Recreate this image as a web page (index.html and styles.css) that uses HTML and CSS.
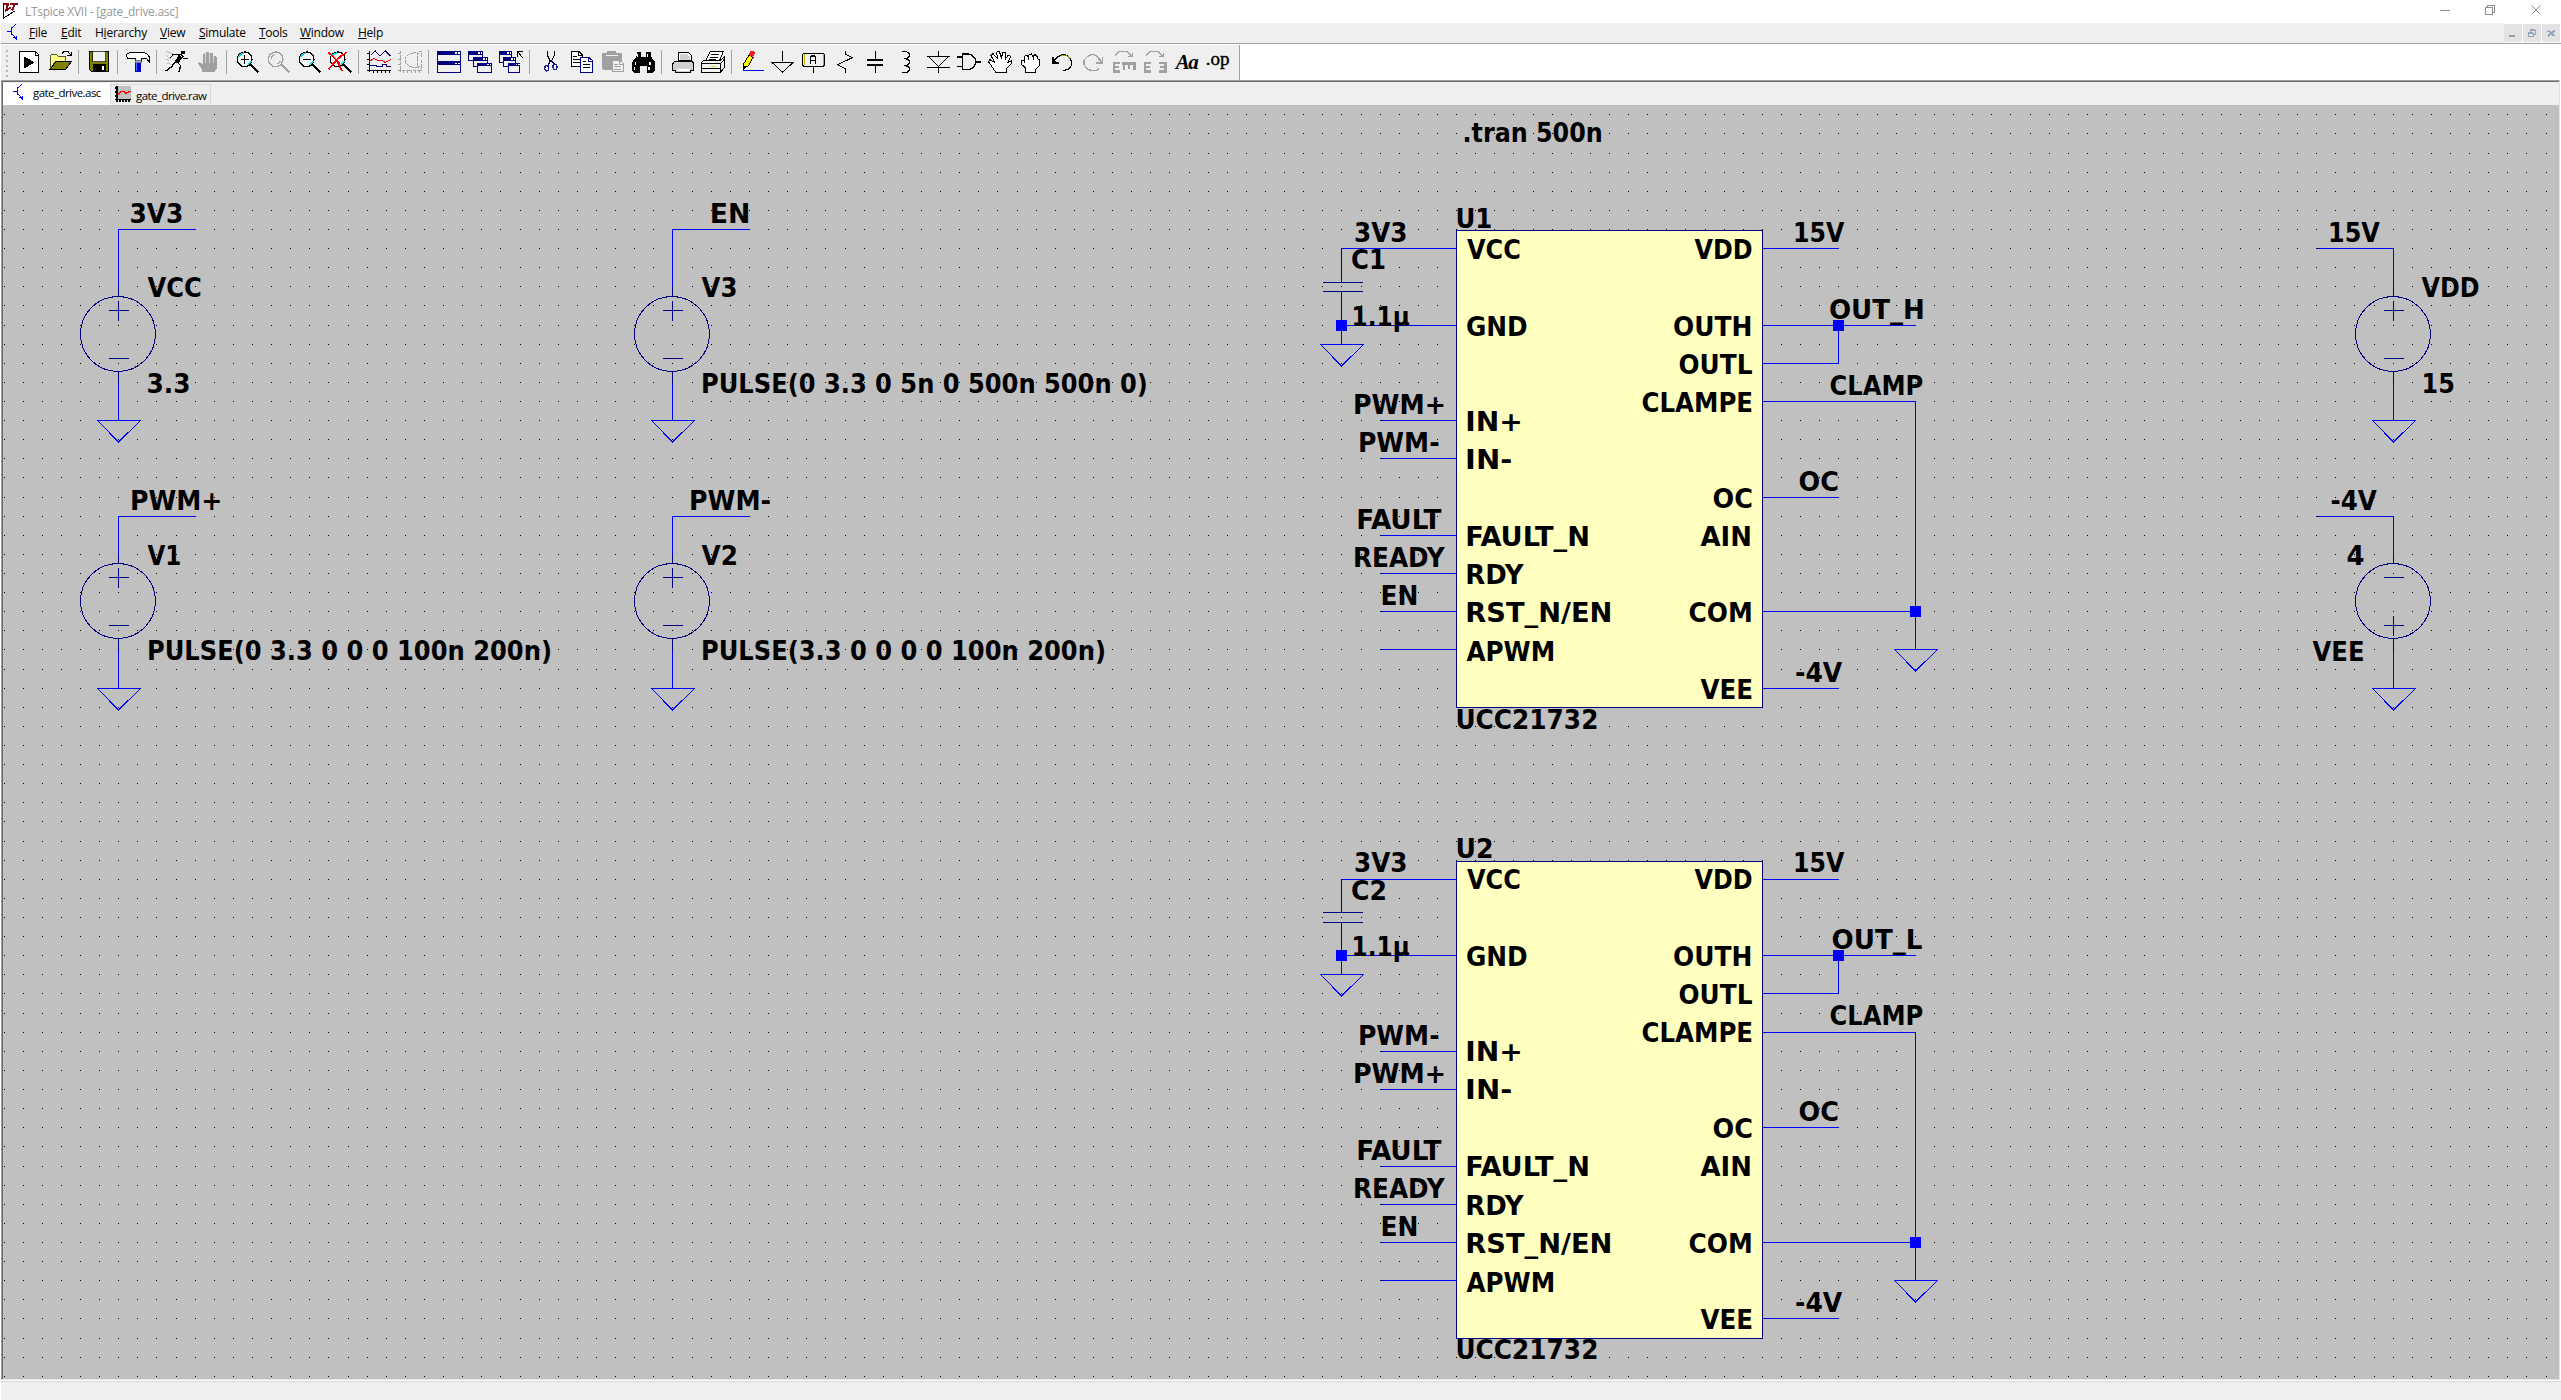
FILE: index.html
```html
<!DOCTYPE html>
<html lang="en">
<head>
<meta charset="utf-8">
<title>LTspice XVII - [gate_drive.asc]</title>
<link rel="stylesheet" href="styles.css">
</head>
<body>
<div class="app">
  <header class="titlebar">
    <svg class="app-icon" viewBox="0 0 54 57"><path d="M9 9L34 9L27 24L51 12L42 42L12 54Z" fill="#fff"/><path d="M11 10V54L46 32" fill="none" stroke="#000" stroke-width="3"/><path d="M12 12H24L18 31L32 22M30 12H54M44 12L36 32" fill="none" stroke="#8b0c14" stroke-width="6"/></svg>
    <span class="app-title">LTspice XVII - [gate_drive.asc]</span>
    <svg class="window-controls" viewBox="2400 0 161 23"><path d="M2440 10.5h10M2485.500 7.500h7v7h-7zM2487.500 7v-1.500h7v7h-2" fill="none" stroke="#8c8c8c"/><path d="M2531.500 5.500l9 9m0-9l-9 9" fill="none" stroke="#8c8c8c" shape-rendering="auto"/></svg>
  </header>
  <nav class="menubar">
    <svg class="doc-icon" viewBox="0 0 42 54"><path d="M6 24H18M18 12V36M18 18L27 9L33 3M18 30L34 47M34 38V50M24 44H34" fill="none" stroke="#00f" stroke-width="3"/></svg>
    <span class="menu m-file"><u>F</u>ile</span>
    <span class="menu m-edit"><u>E</u>dit</span>
    <span class="menu m-hier">H<u>i</u>erarchy</span>
    <span class="menu m-view"><u>V</u>iew</span>
    <span class="menu m-sim"><u>S</u>imulate</span>
    <span class="menu m-tools"><u>T</u>ools</span>
    <span class="menu m-win"><u>W</u>indow</span>
    <span class="menu m-help"><u>H</u>elp</span>
    <div class="mdi-controls">
      <svg viewBox="0 0 54 54"><path d="M15 36H33" stroke="#94a4b6" stroke-width="6"/></svg>
      <svg viewBox="0 0 54 54"><path d="M16 27H31V37H16ZM22 24V18H37V30H33M16 25H31M22 17H37" fill="none" stroke="#94a4b6" stroke-width="3"/></svg>
      <svg viewBox="0 0 54 54"><path d="M18 20L38 36M38 20L18 36" stroke="#94a4b6" stroke-width="6"/></svg>
    </div>
  </nav>
  <div class="toolstrip">
    <div class="toolbar">
      <svg class="tool" viewBox="42 147 93 78"><path d="M58 154H106L116 164V217H58Z" fill="#fff" stroke="#000" stroke-width="3"/><path d="M106 154V166H116" fill="none" stroke="#000" stroke-width="3"/><path d="M72 169L104 187L72 206Z"/></svg>
      <svg class="tool" viewBox="135 147 93 78"><path d="M151 206V168L157 162H169L175 168H196V184H166Z" fill="#ffff8c" stroke="#000" stroke-width="2"/><path d="M151 207L169 184H215L198 207Z" fill="#808000" stroke="#000" stroke-width="3"/><path d="M186 160L192 154H204L212 166M202 167H214V156" fill="none" stroke="#000" stroke-width="3"/></svg>
      <i class="sep"></i>
      <svg class="tool" viewBox="252 147 93 78"><path d="M268 154H326V214H274L268 208Z" fill="#808000" stroke="#000" stroke-width="3"/><path d="M278 154H317V185H278Z" fill="#f0f0f0" stroke="#000" stroke-width="2"/><path d="M278 193H317V214H278Z"/><path d="M305 197H313V210H305Z" fill="#fff"/></svg>
      <i class="sep"></i>
      <svg class="tool" viewBox="369 147 93 78"><path d="M379 164L391 156H424L440 160L449 172V187L438 174H423V184H406V174H382Z" fill="#fff" stroke="#000" stroke-width="3"/><path d="M405 180H423V188H405Z" fill="#b8b8b8" stroke="#555" stroke-width="2"/><path d="M406 188H424V217H406Z" fill="#0000c8"/><path d="M410 190V214" stroke="#3c78ff" stroke-width="4"/></svg>
      <i class="sep"></i>
      <svg class="tool" viewBox="486 147 93 78"><path d="M544 153H555V162H544Z"/><path d="M519 163H543L549 169L533 188L542 197L537 216M541 168L525 187L514 201L500 211H496" fill="none" stroke="#000" stroke-width="4"/><path d="M537 164L548 174L533 190L523 186Z"/><path d="M548 176H563M520 163L511 173" stroke="#000" stroke-width="3"/><path d="M498 154L520 162M499 167L512 177M498 176L508 184M500 190L514 193" stroke="#999" stroke-width="2"/></svg>
      <svg class="tool" viewBox="579 147 93 78"><path d="M606 217V208L594 190L598 186L608 192V164L614 160L618 166V186V158L625 154L629 160V186V160L636 158L640 164V188V168L646 166L650 172V206L643 217Z" fill="#a0a0a0"/><path d="M617 166V190M628 160V190M639 166V190" stroke="#f0f0f0" stroke-width="2"/></svg>
      <i class="sep"></i>
      <svg class="tool" viewBox="696 147 93 78"><circle cx="734" cy="178" r="22" fill="#f4f4f4" stroke="#000" stroke-width="4"/><path d="M716 172Q720 161 732 159M744 193L754 183" fill="none" stroke="#00e0e8" stroke-width="5"/><path d="M722 178H747M734 165V191" stroke="#000" stroke-width="4"/><path d="M752 194L775 216" stroke="#000" stroke-width="7"/></svg>
      <svg class="tool" viewBox="789 147 93 78"><circle cx="827" cy="178" r="22" fill="none" stroke="#a0a0a0" stroke-width="4"/><path d="M813 178Q814 166 825 164M832 192Q840 190 841 182" fill="none" stroke="#a0a0a0" stroke-width="3"/><path d="M845 194L868 216" stroke="#a0a0a0" stroke-width="7"/></svg>
      <svg class="tool" viewBox="882 147 93 78"><circle cx="920" cy="178" r="22" fill="#f4f4f4" stroke="#000" stroke-width="4"/><path d="M902 172Q906 161 918 159M930 193L940 183" fill="none" stroke="#00e0e8" stroke-width="5"/><path d="M908 178H933" stroke="#000" stroke-width="4"/><path d="M938 194L961 216" stroke="#000" stroke-width="7"/></svg>
      <svg class="tool" viewBox="975 147 93 78"><circle cx="1013" cy="178" r="22" fill="#f4f4f4" stroke="#000" stroke-width="4"/><path d="M995 172Q999 161 1011 159M1023 193L1033 183" fill="none" stroke="#00e0e8" stroke-width="5"/><path d="M1031 194L1054 216" stroke="#000" stroke-width="7"/><path d="M985 157L1010 180L1026 213M1040 157L1012 178L986 208" fill="none" stroke="#f00" stroke-width="5"/><path d="M992 164L1020 190M1022 166L996 192" stroke="#f00" stroke-width="4"/></svg>
      <i class="sep"></i>
      <svg class="tool" viewBox="1092 147 93 78"><path d="M1107 154V217M1101 210H1173M1101 160H1107M1101 177H1107M1101 193H1107M1120 210V218M1132 210V218M1144 210V218M1156 210V218M1168 210V218" fill="none" stroke="#000" stroke-width="3"/><path d="M1112 166L1126 153L1140 168L1156 153L1172 168" fill="none" stroke="#000080" stroke-width="3"/><path d="M1108 184L1122 175L1134 181H1146L1155 187L1172 179" fill="none" stroke="#f00" stroke-width="3"/><path d="M1110 196H1128V199H1146V193H1158V199H1172" fill="none" stroke="#000080" stroke-width="3"/></svg>
      <svg class="tool" viewBox="-15 27 93 78"><path d="M2 33V100M-5 92H67M10 92V100M22 92V100M34 92V100M46 92V100M58 92V100M-5 40H2M-5 57H2M-5 73H2M16 68V52L28 42L48 36L58 42M16 68L30 80L52 84L60 78M53 36V84M58 33H64V50M64 60V86" fill="none" stroke="#a0a0a0" stroke-width="3" stroke-dasharray="9 2"/></svg>
      <i class="sep"></i>
      <svg class="tool" viewBox="102 27 93 78"><path d="M112 34H182V97H112Z" fill="#f0f0f0" stroke="#000080" stroke-width="3"/><path d="M111 33H183V45H111ZM111 63H183V76H111Z" fill="#000080"/><path d="M165 37H170V41H165ZM175 37H180V41H175ZM165 68H170V72H165ZM175 68H180V72H175Z" fill="#fff"/></svg>
      <svg class="tool" viewBox="195 27 93 78"><g fill="#f0f0f0" stroke="#000080" stroke-width="3"><path d="M205 35H247V61H205Z"/><path d="M220 53H261V80H220Z"/><path d="M232 70H274V97H232Z"/></g><path d="M205 34H248V44H205ZM219 52H262V62H219ZM231 69H275V79H231Z" fill="#000080"/><path d="M235 37h4v4h-4zM242 37h4v4h-4zM250 55h4v4h-4zM257 55h4v4h-4zM262 72h4v4h-4zM269 72h4v4h-4z" fill="#fff"/></svg>
      <svg class="tool" viewBox="288 27 93 78"><g fill="#f0f0f0" stroke="#000080" stroke-width="3"><path d="M298 35H333V66H298Z"/><path d="M309 53H345V80H309Z"/><path d="M325 70H359V97H325Z"/></g><path d="M297 34H334V44H297ZM308 52H346V62H308ZM324 69H360V79H324Z" fill="#000080"/><path d="M322 37h4v4h-4zM329 37h4v4h-4zM334 55h4v4h-4zM341 55h4v4h-4zM348 72h4v4h-4zM355 72h4v4h-4z" fill="#fff"/><path d="M353 50V35H369M355 37L368 54" fill="none" stroke="#000" stroke-width="3"/></svg>
      <i class="sep"></i>
      <svg class="tool" viewBox="405 27 93 78"><path d="M443 34V46L452 64M463 34V46L454 64" fill="none" stroke="#000" stroke-width="4"/><path d="M452 62L444 76M455 62L464 73" stroke="#000080" stroke-width="4"/><ellipse cx="440" cy="85" rx="6" ry="8" fill="none" stroke="#202090" stroke-width="4"/><ellipse cx="465" cy="81" rx="6" ry="8" fill="none" stroke="#202090" stroke-width="4"/></svg>
      <svg class="tool" viewBox="498 27 93 78"><path d="M514 35H538L548 45V79H514Z" fill="#fff" stroke="#000" stroke-width="3"/><path d="M536 35V47H548M519 49H530M519 58H542M519 67H542" fill="none" stroke="#000" stroke-width="3"/><path d="M541 52H566L578 62V97H541Z" fill="#fff" stroke="#000080" stroke-width="3"/><path d="M564 52V64H577" fill="none" stroke="#000080" stroke-width="3"/><path d="M548 63H558M548 73H570M548 82H570" stroke="#000" stroke-width="3"/></svg>
      <svg class="tool" viewBox="591 27 93 78"><path d="M606 40H622V34H648V40H665V62H640V90H610L606 86Z" fill="#a0a0a0"/><path d="M618 45H654" stroke="#f0f0f0" stroke-width="3"/><path d="M637 62H660L671 70V95H637Z" fill="#f0f0f0" stroke="#a0a0a0" stroke-width="3"/><path d="M659 62V72H670M643 73H653M643 80H663M643 87H663" fill="none" stroke="#a0a0a0" stroke-width="3"/></svg>
      <svg class="tool" viewBox="684 27 93 78"><path d="M710 36H722V48L726 52H735L739 48V36H752V48L765 66V91L759 98H741V78H721V98H703L697 91V66L710 48Z"/><path d="M713 43V52M743 43V52M706 66V76M750 66V76M703 80V90M747 80V90" stroke="#fff" stroke-width="4"/></svg>
      <i class="sep"></i>
      <svg class="tool" viewBox="801 27 93 78"><path d="M834 38H866L874 47V62H834Z" fill="#fff" stroke="#000" stroke-width="3"/><path d="M839 43H863V47H869V60H839Z" fill="#d0d0d0"/><path d="M825 63H874L881 70V90H872V97H826V90H818V72Z" fill="#d0d0d0" stroke="#000" stroke-width="3"/><path d="M830 90H870" stroke="#fff" stroke-width="6"/></svg>
      <svg class="tool" viewBox="894 27 93 78"><path d="M930 35H970L958 63H917Z" fill="#fff" stroke="#000" stroke-width="3"/><path d="M934 44H957M930 51H953M926 58H949" stroke="#000" stroke-width="3"/><path d="M904 69L912 60H962L973 50V82L962 97H904Z" fill="#f4f4f4" stroke="#000" stroke-width="3"/><path d="M904 71H962M904 86H962M962 70V97M962 70L973 58" fill="none" stroke="#000" stroke-width="3"/><path d="M932 79H948" stroke="#e8d800" stroke-width="5"/></svg>
      <i class="sep"></i>
      <svg class="tool" viewBox="1011 27 93 78"><path d="M1030 87L1032 70L1047 45L1060 51L1046 76Z" fill="#ff0" stroke="#000" stroke-width="3"/><path d="M1047 44L1051 34H1062L1065 40L1059 51Z" fill="#f02020"/><path d="M1030 78V89L1042 80Z"/><path d="M1029 91H1092" stroke="#00f" stroke-width="3"/></svg>
      <svg class="tool" viewBox="1104 27 93 78"><path d="M1147 33V64M1114 67H1182" fill="none" stroke="#000" stroke-width="4"/><path d="M1117 68L1147 97L1179 68" fill="none" stroke="#000" stroke-width="3"/></svg>
      <svg class="tool" viewBox="1197 27 93 78"><path d="M1211 40H1270L1273 43V76L1270 79H1211L1208 76V43Z" fill="#f0f0f0" stroke="#000" stroke-width="4"/><path d="M1212 43V76M1271 43V76" stroke="#b8b000" stroke-width="3"/><path d="M1240 79V98" stroke="#000" stroke-width="4"/><path d="M1231 72V51L1235 48H1243L1247 51V72M1231 61H1247" fill="none" stroke="#000" stroke-width="4"/></svg>
      <svg class="tool" viewBox="30 27 93 78"><path d="M75 33V42L97 53L53 74L75 86V98" fill="none" stroke="#000" stroke-width="3"/></svg>
      <svg class="tool" viewBox="123 27 93 78"><path d="M166 33V60M166 76V98" stroke="#000" stroke-width="3"/><path d="M141 61H189M141 75H189" stroke="#000" stroke-width="6"/></svg>
      <svg class="tool" viewBox="216 27 93 78"><path d="M247 35H260L268 42V50L261 56H252M259 56L268 62V70L261 76H252M259 77L268 83V90L261 97H247" fill="none" stroke="#000" stroke-width="4"/></svg>
      <svg class="tool" viewBox="309 27 93 78"><path d="M356 33V48M322 48H390M322 82H390M356 82V98M326 49L356 80L386 49" fill="none" stroke="#000" stroke-width="3"/></svg>
      <svg class="tool" viewBox="402 27 93 78"><path d="M427 42H446Q466 46 467 66Q464 86 446 89H427Z" fill="#f0f0f0" stroke="#000" stroke-width="4"/><path d="M411 51H427M411 80H427M467 66H483" stroke="#000" stroke-width="4"/></svg>
      <svg class="tool" viewBox="495 27 93 78"><path d="M527 97L512 74L505 65L510 59L524 67L513 47L519 41L532 55L530 36L538 34L544 53L549 37L557 36L556 57L564 46L572 49L562 69L574 62V70L558 88V97Z" fill="#fff" stroke="#000" stroke-width="3"/></svg>
      <svg class="tool" viewBox="588 27 93 78"><path d="M616 97V83L603 72V62H614V49L620 46L626 52V45L634 42L639 50L645 44L652 50V56L659 60V75L647 88V97Z" fill="#fff" stroke="#000" stroke-width="3"/><path d="M626 50V59M639 50V59M614 62V68" stroke="#000" stroke-width="3"/></svg>
      <svg class="tool" viewBox="681 27 93 78"><path d="M699 66L712 52L726 45H738L749 54L755 66V76L744 88L728 92" fill="none" stroke="#000" stroke-width="4"/><path d="M724 45H738L750 55" fill="none" stroke="#9a9400" stroke-width="3"/><path d="M698 51V69H717M699 60L710 68" fill="none" stroke="#000" stroke-width="5"/></svg>
      <svg class="tool" viewBox="774 27 93 78"><path d="M846 67L830 47L818 43L804 48L792 60V74L803 88L816 92H828L838 86" fill="none" stroke="#a0a0a0" stroke-width="4"/><path d="M847 52V69H829M847 69L836 58" fill="none" stroke="#a0a0a0" stroke-width="5"/></svg>
      <svg class="tool" viewBox="867 27 93 78"><path d="M885 47L897 35H921L936 50M924 50H938V38" fill="none" stroke="#a0a0a0" stroke-width="3"/><path d="M900 68H881V94H900M881 81H897M906 70H948M911 70V91M927 70V86M943 70V91" fill="none" stroke="#a0a0a0" stroke-width="7"/></svg>
      <svg class="tool" viewBox="960 27 93 78"><path d="M978 47L990 35H1014L1029 50M1017 50H1031V38" fill="none" stroke="#a0a0a0" stroke-width="3"/><path d="M993 68H974V94H993M974 81H990M1017 68H1036V94H1017M1036 81H1020" fill="none" stroke="#a0a0a0" stroke-width="7"/></svg>
      <span class="tool glyph aa">Aa</span>
      <span class="tool glyph op">.op</span>
    </div>
  </div>
  <main class="document">
    <div class="tabs">
      <div class="tab active">
        <svg class="tab-icon" viewBox="0 0 42 54"><path d="M6 24H18M18 12V36M18 18L27 9L33 3M18 30L34 47M34 38V50M24 44H34" fill="none" stroke="#00f" stroke-width="3"/></svg>
        <span class="tab-label">gate_drive.asc</span>
      </div>
      <div class="tab raw">
        <svg class="plot-icon" viewBox="345 258 48 48"><path d="M351 258H393V297H351Z" fill="#c0c0c0"/><path d="M351 258V306M345 298H393M345 264H351M345 276H351M345 288H351M360 298V306M369 298V306M378 298V306M387 298V306" stroke="#000" stroke-width="4"/><path d="M354 285L364 274L371 274L378 280L392 273" fill="none" stroke="#f00" stroke-width="4"/></svg>
        <span class="tab-label">gate_drive.raw</span>
      </div>
    </div>
    <svg class="schematic" id="schematic" viewBox="3 105 2556 1274"></svg>
  </main>
  <footer class="statusbar"></footer>
</div>
<script src="schematic.js"></script>
</body>
</html>
```
FILE: styles.css
```css
* { box-sizing: border-box; }
html { overflow: hidden; }
body { margin: 0; background: #fff; font-family: "Open Sans", "Noto Sans", sans-serif; font-size: 12px; color: #000; }
.app { display: flex; flex-direction: column; width: 2561px; height: 1400px; overflow: hidden; }
svg { display: block; flex: none; shape-rendering: crispEdges; }

.titlebar { display: flex; height: 23px; background: #fff; }
.app-icon { width: 18px; height: 19px; }
.app-title { margin-left: 7px; line-height: 24px; color: #999; width: 160px; white-space: nowrap; letter-spacing: -0.28px; }
.window-controls { width: 161px; height: 23px; margin-left: auto; }

.menubar { display: flex; height: 20px; margin-left: 1px; background: #efefef; }
.doc-icon { width: 14px; height: 18px; margin: 0 14px 0 4px; }
.menu { line-height: 20px; white-space: nowrap; letter-spacing: -0.25px; }
.menu u { text-underline-offset: 1px; }
.m-file { margin-left: -4px; width: 32px; }
.m-edit { width: 34px; }
.m-hier { width: 65px; }
.m-view { width: 39px; }
.m-sim { width: 60px; }
.m-tools { width: 41px; }
.m-win { width: 58px; }
.m-help { width: 30px; }
.mdi-controls { display: flex; gap: 1px; margin-left: auto; padding: 1px 1px 0 0; background: #fff; }
.mdi-controls svg { width: 18px; height: 18px; background: #e3e3e3; }

.toolstrip { height: 37px; margin-left: 1px; border-top: 1px solid #a0a0a0; padding-top: 1px; background: #fff; }
.toolbar { display: flex; width: 1239px; height: 35px; padding: 4px 0 0 13px; background: #efefef; border-right: 1px solid #a0a0a0; position: relative; }
.toolbar::before { content: ""; position: absolute; left: 5px; top: 5px; width: 2px; height: 27px; background: repeating-linear-gradient(#b8b8b8 0 2px, transparent 2px 5px); }
.tool { flex: none; width: 31px; height: 26px; }
.sep { flex: none; width: 8px; height: 24px; margin-top: 1px; background: linear-gradient(90deg, transparent 2px, #a0a0a0 2px 3px, transparent 3px); }
.glyph { text-align: center; white-space: nowrap; }
.aa { font: italic bold 21px/26px "Liberation Serif", serif; letter-spacing: -1.5px; }
.op { font: 19px/20px "Liberation Serif", serif; -webkit-text-stroke: 0.4px #000; }

.document { display: flex; flex-direction: column; height: 1300px; margin: 0 1px 0 1px; border-top: 1px solid #a0a0a0; border-left: 1px solid #a0a0a0; border-right: 1px solid #e3e3e3; border-bottom: 1px solid #e3e3e3; }
.tabs { display: flex; align-items: flex-start; height: 24px; border-top: 1px solid #696969; border-left: 1px solid #696969; background: #efefef; }
.tab { display: flex; white-space: nowrap; }
.tab.active { width: 107px; height: 22px; margin-top: 1px; background: #fff; }
.tab.raw { width: 101px; height: 20px; margin-top: 2px; border: 1px solid #d9d9d9; border-width: 1px 1px 0 1px; }
.tab-icon { width: 14px; height: 18px; margin: 0 8px 0 8px; }
.plot-icon { width: 16px; height: 16px; margin: 1px 5px 0 4px; }
.tab-label { font-size: 11.5px; line-height: 20px; letter-spacing: -0.55px; }
.raw .tab-label { line-height: 21px; }
.schematic { width: 2557px; height: 1274px; border-left: 1px solid #696969; background: #c0c0c0; }
.schematic .wire { fill: none; stroke: #00f; }
.schematic .part { fill: none; stroke: #000080; }
.schematic .body { fill: #ffffc0; stroke: #000080; }
.schematic .node { fill: #00f; }
.schematic .dots { stroke: #000; }
.schematic text { font: bold 27px "DejaVu Sans Condensed", "DejaVu Sans", sans-serif; fill: #000; }

.statusbar { flex: 1; margin: 1px 0 0 1px; border-top: 1px solid #d7d7d7; background: #f0f0f0; }
```
FILE: schematic.js
```js
// Grid to pixel: one grid step is 19.113px.
const PITCH = 19.113;
const X = k => Math.floor(4.03 + PITCH * k);
const Y = k => Math.floor(114.8 + PITCH * k);
const svg = document.getElementById('schematic');
const pen = document.createElement('canvas').getContext('2d');
pen.font = 'bold 27px "DejaVu Sans Condensed", "DejaVu Sans", sans-serif';

function add(name, attrs, text) {
  const el = document.createElementNS('http://www.w3.org/2000/svg', name);
  for (const key in attrs) el.setAttribute(key, attrs[key]);
  if (text) el.textContent = text;
  svg.appendChild(el);
}

// Polyline through grid points [x, y, x, y, ...].
function line(cls, ...p) {
  let d = '';
  for (let i = 0; i < p.length; i += 2) d += (i ? 'L' : 'M') + (X(p[i]) + 0.5) + ' ' + (Y(p[i + 1]) + 0.5);
  add('path', { class: cls, d });
}
const wire = (...p) => line('wire', ...p);
const part = (...p) => line('part', ...p);

// Text whose ink spans left..right in pixels.
function label(text, left, right, base) {
  const m = pen.measureText(text);
  const s = (right - left) / (m.actualBoundingBoxRight + m.actualBoundingBoxLeft);
  const x = left + m.actualBoundingBoxLeft * s;
  add('text', { transform: `translate(${x.toFixed(2)} ${Math.round(base)}) scale(${s.toFixed(4)} 1)` }, text);
}

function ground(k, j) {
  const x = X(k) + 0.5, y = Y(j) + 0.5;
  add('path', { class: 'wire', d: `M${x - 21} ${y}H${x + 22}L${x} ${y + 21.5}Z` });
}
function node(k, j) {
  add('rect', { class: 'node', x: X(k) - 5, y: Y(j) - 5, width: 11, height: 11 });
}

// Voltage source; j is the row of its upper pin.
function source(k, j, flipped) {
  const x = X(k) + 0.5, top = Y(j + 0.5) + 0.5;
  add('circle', { class: 'part', cx: x - 0.5, cy: top + 37.5, r: 37.5 });
  part(k, j, k, j + 0.5);
  add('path', { class: 'part', d: `M${x} ${top + 75}V${Y(j + 5)}` });
  const plus = top + (flipped ? 62 : 14), minus = top + (flipped ? 14 : 62);
  add('path', { class: 'part', d: `M${x - 9.5} ${plus}h20M${x} ${plus - 10}v20M${x - 9.5} ${minus}h20` });
  wire(k, j + 5, k, j + 7);
  ground(k, j + 7);
}

let dots = '';
for (let j = 0; j < 67; j++) for (let k = 0; k < 134; k++) dots += `M${X(k)} ${Y(j) + 0.5}h1`;
add('path', { class: 'dots', d: dots });

// Supplies and stimulus
wire(10, 6, 6, 6, 6, 9);
wire(39, 6, 35, 6, 35, 9);
wire(10, 21, 6, 21, 6, 23);
wire(39, 21, 35, 21, 35, 23);
wire(121, 7, 125, 7, 125, 9);
wire(121, 21, 125, 21, 125, 23);
source(6, 9); source(35, 9); source(6, 23); source(35, 23);
source(125, 9); source(125, 23, true);

label('3V3', 130.5, 181.5, 222.5); label('VCC', 147.5, 201, 296.5); label('3.3', 147.5, 188.5, 392.5);
label('EN', 712, 749, 222.5); label('V3', 701.5, 735.5, 296.5);
label('PULSE(0 3.3 0 5n 0 500n 500n 0)', 703, 1147, 392.5);
label('PWM+', 132, 220, 509.5); label('V1', 147.5, 180.5, 564.5);
label('PULSE(0 3.3 0 0 0 100n 200n)', 149, 551, 660);
label('PWM-', 691, 770, 509.5); label('V2', 701.5, 736, 564.5);
label('PULSE(3.3 0 0 0 0 100n 200n)', 703, 1105, 660);
label('15V', 2330, 2380, 242); label('VDD', 2421.5, 2478.5, 297); label('15', 2423.5, 2454, 393);
label('-4V', 2331.5, 2377, 510); label('4', 2347.5, 2363.5, 565); label('VEE', 2312.5, 2363, 661);
label('.tran 500n', 1464.5, 1601.5, 142);

// Gate driver block; o is its row offset.
function driver(o, name, cap, inP, inN, out) {
  const dy = o ? Y(7 + o) - Y(7) - 0.5 : 0;
  const t = (s, l, r, b) => label(s, l, r, b + dy);
  const x = X(76) + 0.5, y = Y(6 + o) + 1.5;
  add('rect', { class: 'body', x, y, width: X(92) - X(76), height: Y(31 + o) - Y(6 + o) - 1 });
  wire(70, 7 + o, 76, 7 + o);
  wire(70, 11 + o, 76, 11 + o);
  part(70, 7 + o, 70, 8.75 + o);
  part(70, 9.27 + o, 70, 11 + o);
  part(69, 8.75 + o, 71.05, 8.75 + o);
  part(69, 9.27 + o, 71.05, 9.27 + o);
  wire(70, 11 + o, 70, 12 + o);
  ground(70, 12 + o);
  node(70, 11 + o);
  for (const j of [16, 18, 22, 24, 26, 28]) wire(72, j + o, 76, j + o);
  for (const j of [7, 20, 30]) wire(92, j + o, 96, j + o);
  wire(92, 11 + o, 100, 11 + o);
  wire(92, 13 + o, 96, 13 + o, 96, 11 + o);
  node(96, 11 + o);
  wire(92, 15 + o, 100, 15 + o, 100, 28 + o);
  wire(92, 26 + o, 100, 26 + o);
  node(100, 26 + o);
  ground(100, 28 + o);

  t(name, 1457.5, 1491.5, 227.5);
  t('3V3', 1355, 1405.5, 241.5); t(cap, 1352, 1385, 269); t('1.1µ', 1353.5, 1410, 325.5);
  t(inP, inP === 'PWM+' ? 1355 : 1360, inP === 'PWM+' ? 1443.5 : 1438.5, 414);
  t(inN, inN === 'PWM+' ? 1355 : 1360, inN === 'PWM+' ? 1443.5 : 1438.5, 452);
  t('FAULT', 1358.5, 1442, 529); t('READY', 1355, 1445, 567); t('EN', 1382.5, 1417, 605);
  t('VCC', 1467, 1520, 258.5); t('GND', 1467, 1526.5, 335.5);
  t('IN+', 1467.5, 1520, 430.5); t('IN-', 1467.5, 1511, 468.5);
  t('FAULT_N', 1467.5, 1588.5, 545.5); t('RDY', 1467.5, 1524, 584);
  t('RST_N/EN', 1467.5, 1611, 622); t('APWM', 1466.5, 1553, 661);
  t('VDD', 1694.5, 1751.5, 258.5); t('OUTH', 1674, 1751, 335.5); t('OUTL', 1679.5, 1752, 373.5);
  t('CLAMPE', 1642.5, 1751.5, 411.5); t('OC', 1713.5, 1752, 507.5); t('AIN', 1700.5, 1750.5, 545.5);
  t('COM', 1689.5, 1750.5, 622); t('VEE', 1700.5, 1751.5, 698.5);
  t('15V', 1795, 1844.5, 241.5);
  t(out, out === 'OUT_H' ? 1830 : 1832.5, out === 'OUT_H' ? 1923.5 : 1922, 318.5);
  t('CLAMP', 1830.5, 1922.5, 394.5); t('OC', 1799.5, 1838, 490.5); t('-4V', 1796, 1842.5, 681.5);
  t('UCC21732', 1457.5, 1596.5, 728.5);
}
driver(0, 'U1', 'C1', 'PWM+', 'PWM-', 'OUT_H');
driver(33, 'U2', 'C2', 'PWM-', 'PWM+', 'OUT_L');
```
